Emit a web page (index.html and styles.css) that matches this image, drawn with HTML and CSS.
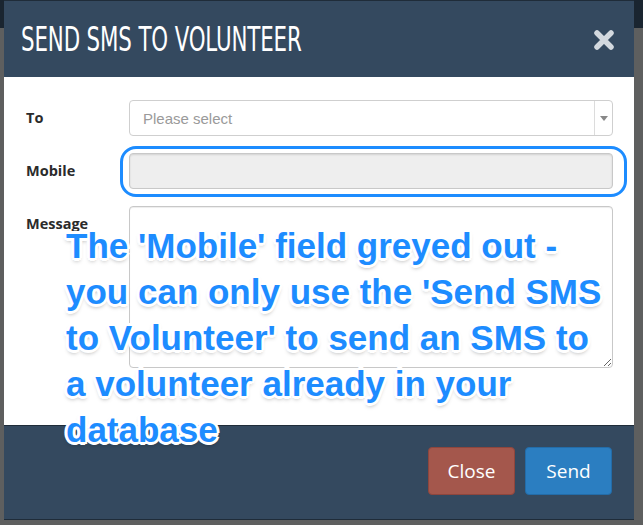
FILE: index.html
```html
<!DOCTYPE html>
<html>
<head>
<meta charset="utf-8">
<link rel="stylesheet" href="styles.css">
</head>
<body>
<div class="modal">
  <div class="modal-header">
    <h1 class="title"><span>SEND SMS TO VOLUNTEER</span></h1>
    <svg class="close-x" width="22" height="22" viewBox="0 0 22 22"><path d="M4 4 L18 18 M18 4 L4 18" stroke="#d3d9df" stroke-width="5.5" stroke-linecap="round"/></svg>
  </div>
  <div class="modal-body">
    <form class="form">
      <label class="label">To</label>
      <div class="select">
        <span class="placeholder">Please select</span>
        <span class="arrow"><svg width="8" height="5" viewBox="0 0 8 5"><path d="M0 0 L8 0 L4 5 Z" fill="#888"/></svg></span>
      </div>
      <label class="label">Mobile</label>
      <div class="input disabled"></div>
      <label class="label">Message</label>
      <textarea class="textarea"></textarea>
    </form>
  </div>
  <div class="modal-footer">
    <button class="btn btn-close">Close</button>
    <button class="btn btn-send">Send</button>
  </div>
</div>
<div class="highlight"></div>
<div class="annotation">The 'Mobile' field greyed out -<br>you can only use the 'Send SMS<br>to Volunteer' to send an SMS to<br>a volunteer already in your<br>database</div>
</body>
</html>
```
FILE: styles.css
```css
html, body {
  margin: 0;
  padding: 0;
}
body {
  width: 643px;
  height: 525px;
  overflow: hidden;
  position: relative;
  background: linear-gradient(to bottom, #1a2530 0, #1a2530 28px, #5e5f5f 28px, #5e5f5f 100%);
  font-family: "Liberation Sans", Arial, sans-serif;
}
.modal {
  margin-left: 4px;
  width: 630px;
  display: flex;
  flex-direction: column;
}
.modal-header {
  height: 77px;
  background: #34495f;
  border-top: 1px solid #1f2c39;
  box-sizing: border-box;
  display: flex;
  align-items: center;
  justify-content: space-between;
  padding: 0 19px 0 17px;
}
.title {
  margin: 0;
  font-family: "Liberation Sans Narrow", "DejaVu Sans Condensed", sans-serif;
  font-weight: normal;
  font-size: 33px;
  color: #ffffff;
  line-height: 1;
  white-space: nowrap;
}
.title span {
  display: inline-block;
  transform: scaleX(0.72);
  transform-origin: left center;
  letter-spacing: -0.2px;
}
.close-x {
  display: block;
  margin-top: 1px;
}
.modal-body {
  background: #ffffff;
  height: 348px;
  box-sizing: border-box;
  padding: 23px 21px 0 22px;
}
.form {
  display: grid;
  grid-template-columns: 103px 1fr;
  row-gap: 17px;
  margin: 0;
}
.label {
  font-family: "Open Sans", sans-serif;
  font-weight: bold;
  font-size: 14.5px;
  color: #2b2b2b;
  line-height: 36px;
}
.select {
  height: 36px;
  box-sizing: border-box;
  border: 1px solid #cfcfcf;
  border-radius: 4px;
  display: flex;
  align-items: center;
  justify-content: space-between;
  background: #fff;
}
.placeholder {
  padding-left: 13px;
  font-size: 15px;
  color: #9a9a9a;
}
.arrow {
  width: 17px;
  height: 34px;
  border-left: 1px solid #dcdcdc;
  display: flex;
  align-items: center;
  justify-content: center;
}
.input {
  height: 36px;
  box-sizing: border-box;
  border: 1px solid #c8c8c8;
  border-radius: 4px;
  background: #eeeeee;
  box-shadow: inset 0 1px 2px rgba(0,0,0,0.12);
}
.textarea {
  display: block;
  width: 100%;
  height: 162px;
  box-sizing: border-box;
  border: 1px solid #c8c8c8;
  border-radius: 4px;
  background: #fff;
  box-shadow: inset 0 1px 1px rgba(0,0,0,0.075);
  margin: 0;
  padding: 6px 12px;
  font-family: "Liberation Sans", sans-serif;
}
.modal-footer {
  height: 95px;
  box-sizing: border-box;
  background: #34495f;
  border-top: 1px solid #1f2c39;
  border-bottom: 1px solid #1f2c39;
  display: flex;
  justify-content: flex-end;
  align-items: flex-start;
  gap: 10px;
  padding: 21px 22px 0 0;
}
.btn {
  width: 87px;
  height: 48px;
  border-radius: 4px;
  font-family: "Open Sans", sans-serif;
  font-size: 19px;
  color: #ffffff;
  cursor: pointer;
  padding: 0;
}
.btn-close {
  background: #a4574c;
  border: 1px solid #8e463d;
}
.btn-send {
  background: #2b7ec1;
  border: 1px solid #236ca8;
}
.highlight {
  position: absolute;
  left: 120px;
  top: 146px;
  width: 507px;
  height: 51px;
  box-sizing: border-box;
  border: 3px solid #1d8cff;
  border-radius: 16px;
}
.annotation {
  position: absolute;
  left: 66px;
  top: 223px;
  font-family: "Liberation Sans", Arial, sans-serif;
  font-weight: bold;
  font-size: 35px;
  line-height: 46px;
  color: #1d8cff;
  white-space: nowrap;
  text-shadow:
    -2px -2px 0 #fff, 2px -2px 0 #fff, -2px 2px 0 #fff, 2px 2px 0 #fff,
    0 -3px 0 #fff, 0 3px 0 #fff, -3px 0 0 #fff, 3px 0 0 #fff,
    0 3px 4px rgba(0,0,0,0.35);
}
```
